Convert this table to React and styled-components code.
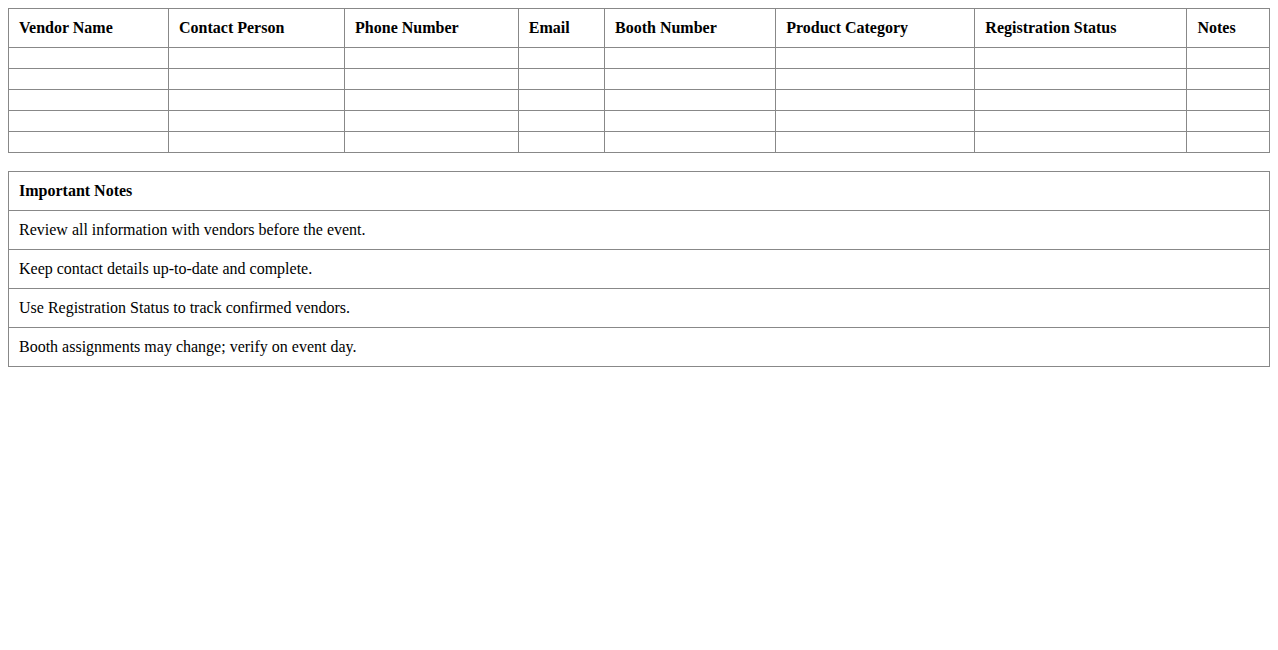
import React from "react";
import styled, { createGlobalStyle } from "styled-components";

const GlobalStyle = createGlobalStyle`
  body {
    margin: 8px;
    font-family: "Liberation Serif", "Times New Roman", serif;
    font-size: 16px;
    color: #000;
    background: #fff;
  }
`;

const Table = styled.table`
  width: 100%;
  border-collapse: collapse;
  margin-bottom: 18px;
`;

const HeadCell = styled.th`
  border: 1px solid #888;
  padding: 10px;
  text-align: left;
  font-weight: bold;
`;

const Cell = styled.td`
  border: 1px solid #888;
  padding: 10px;
  text-align: left;
`;

const columns = [
  "Vendor Name",
  "Contact Person",
  "Phone Number",
  "Email",
  "Booth Number",
  "Product Category",
  "Registration Status",
  "Notes"
];

const notes = [
  "Review all information with vendors before the event.",
  "Keep contact details up-to-date and complete.",
  "Use Registration Status to track confirmed vendors.",
  "Booth assignments may change; verify on event day."
];

export default function App() {
  return (
    <>
      <GlobalStyle />
      <Table>
        <thead>
          <tr>
            {columns.map((c) => (
              <HeadCell key={c}>{c}</HeadCell>
            ))}
          </tr>
        </thead>
        <tbody>
          {[0, 1, 2, 3, 4].map((r) => (
            <tr key={r}>
              {columns.map((c) => (
                <Cell key={c} />
              ))}
            </tr>
          ))}
        </tbody>
      </Table>
      <Table>
        <thead>
          <tr>
            <HeadCell>Important Notes</HeadCell>
          </tr>
        </thead>
        <tbody>
          {notes.map((n) => (
            <tr key={n}>
              <Cell>{n}</Cell>
            </tr>
          ))}
        </tbody>
      </Table>
    </>
  );
}
